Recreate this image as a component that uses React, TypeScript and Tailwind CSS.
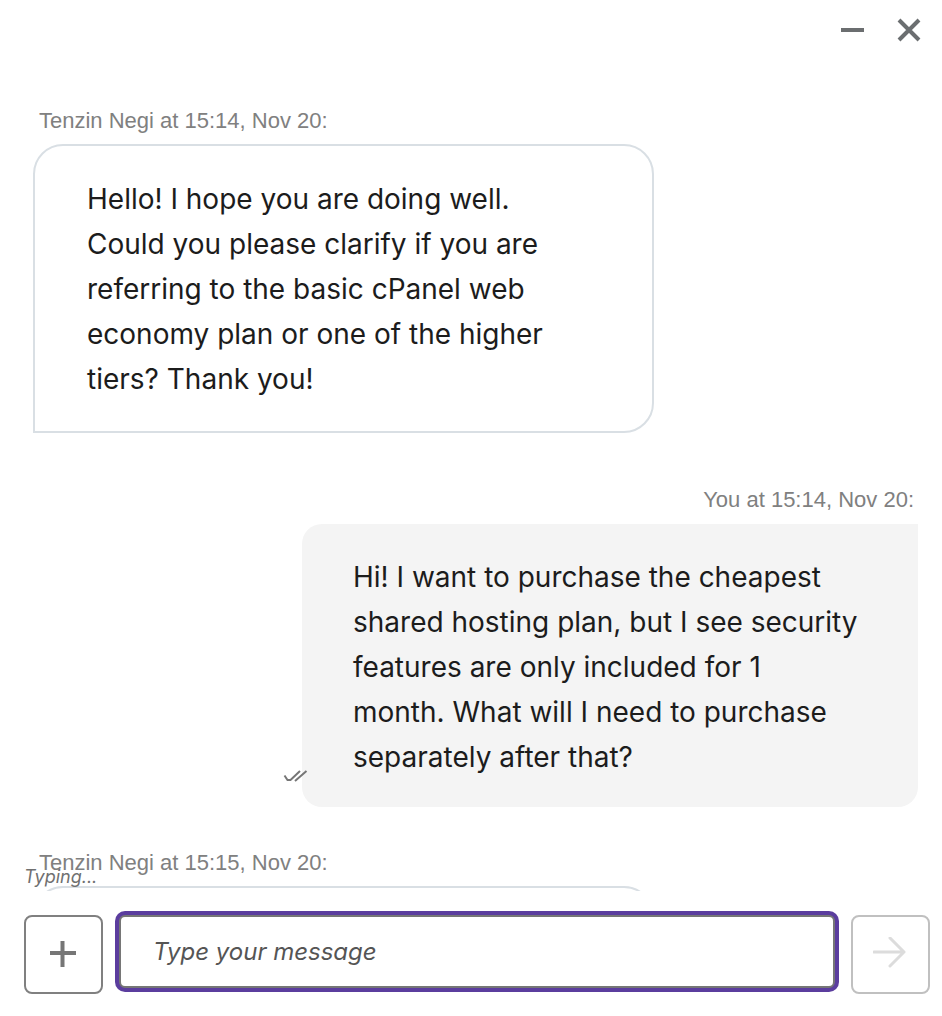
import { useState } from 'react';
import { clsx } from 'clsx';

interface Message {
  id: number;
  own?: boolean;
  author: string;
  time: string;
  text: string;
}

const messages: Message[] = [
  {
    id: 1,
    author: 'Tenzin Negi',
    time: '15:14, Nov 20',
    text: 'Hello! I hope you are doing well.\nCould you please clarify if you are\nreferring to the basic cPanel web\neconomy plan or one of the higher\ntiers? Thank you!',
  },
  {
    id: 2,
    own: true,
    author: 'You',
    time: '15:14, Nov 20',
    text: 'Hi! I want to purchase the cheapest\nshared hosting plan, but I see security\nfeatures are only included for 1\nmonth. What will I need to purchase\nseparately after that?',
  },
  { id: 3, author: 'Tenzin Negi', time: '15:15, Nov 20', text: '' },
];

function ReadReceipt() {
  return (
    <svg
      className="absolute bottom-6 -left-[19px]"
      width="25"
      height="14"
      viewBox="0 0 25 14"
      fill="none"
      stroke="#767676"
      strokeWidth="2"
      aria-label="Read"
    >
      <path d="M1.5 6.5 4.5 11h3L17 2M12 12 23.5 2" />
    </svg>
  );
}

function MessageItem({ message }: { message: Message }) {
  const { own, author, time, text } = message;
  return (
    <li className={clsx('flex flex-col', own ? 'mb-11 items-end' : 'mb-[55px] items-start')}>
      <div className={clsx('text-[22px] leading-6 text-[#808080]', own ? 'mb-3 pr-1' : 'mb-[11px] pl-[6px]')}>
        {author} at {time}:
      </div>
      <div
        className={clsx(
          'relative min-h-24 w-full font-[Inter,sans-serif] text-[28px] leading-[45px] whitespace-pre-line text-[#1c1c1c]',
          own
            ? 'max-w-[616px] rounded-[20px] rounded-tr-none bg-[#f4f4f4] px-[51px] pt-[31px] pb-[27px]'
            : 'max-w-[621px] rounded-[30px] rounded-bl-none border-2 border-[#d9dfe4] px-[52px] pt-[31px] pb-[29px]'
        )}
      >
        {text}
        {own && <ReadReceipt />}
      </div>
    </li>
  );
}

export default function App() {
  const [draft, setDraft] = useState('');

  return (
    <div className="flex h-screen flex-col bg-white font-['Liberation_Sans',sans-serif]">
      {/* Window controls */}
      <header className="flex h-[60px] shrink-0 items-center justify-end gap-7 pr-5">
        <button type="button" aria-label="Minimize">
          <svg width="28" height="28" viewBox="0 0 28 28" stroke="#6b6e70" strokeWidth="4">
            <path d="M3 14h23" />
          </svg>
        </button>
        <button type="button" aria-label="Close">
          <svg width="28" height="28" viewBox="0 0 28 28" stroke="#6b6e70" strokeWidth="4">
            <path d="m5 4 20 20M25 4 5 24" />
          </svg>
        </button>
      </header>

      {/* Conversation */}
      <main className="relative min-h-0 flex-1">
        <ul className="h-full overflow-hidden pt-[49px] pr-6 pl-[33px]">
          {messages.map((message) => (
            <MessageItem key={message.id} message={message} />
          ))}
        </ul>
        <div className="absolute bottom-0 left-6 font-[Inter,sans-serif] text-[18px] leading-7 text-[#707070] italic">
          Typing...
        </div>
      </main>

      {/* Composer */}
      <form
        className="flex shrink-0 items-start gap-4 pt-6 pr-3 pb-[22px] pl-6"
        onSubmit={(e) => {
          e.preventDefault();
          setDraft('');
        }}
      >
        <button
          type="button"
          aria-label="Add attachment"
          className="flex size-[79px] shrink-0 items-center justify-center rounded-lg border-2 border-[#808080]"
        >
          <svg width="28" height="28" viewBox="0 0 28 28" stroke="#767676" strokeWidth="4">
            <path d="M0 12h26M12.5 0v26" />
          </svg>
        </button>
        <input
          type="text"
          aria-label="Message"
          placeholder="Type your message"
          value={draft}
          onChange={(e) => setDraft(e.target.value)}
          className="h-[73px] min-w-0 flex-1 rounded-md border-2 border-[#767676] bg-white px-8 font-[Inter,sans-serif] text-[24px] text-[#1c1c1c] ring-4 ring-[#5b3d9e] outline-none placeholder:text-[#555] placeholder:italic"
        />
        <button
          type="submit"
          aria-label="Send message"
          disabled={!draft.trim()}
          className="flex size-[79px] shrink-0 items-center justify-center rounded-lg border-2 border-[#767676] disabled:border-[#c0c0c0]"
        >
          <svg width="36" height="36" viewBox="0 0 36 36" fill="none" stroke="#dcdcdc" strokeWidth="3" strokeLinecap="round" strokeLinejoin="round">
            <path d="M1 15h30M17 1l14 14-14 14" />
          </svg>
        </button>
      </form>
    </div>
  );
}
